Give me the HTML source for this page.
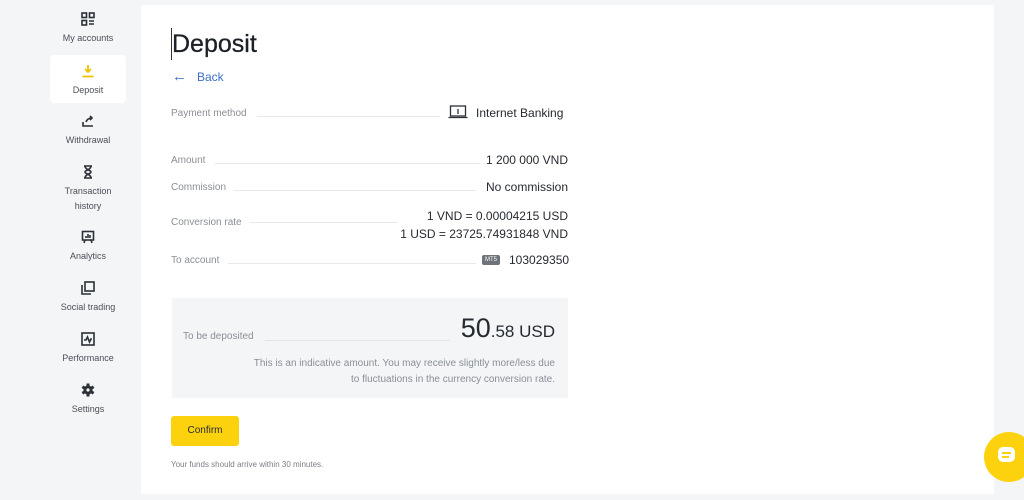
<!DOCTYPE html>
<html><head><meta charset="utf-8"><style>
*{margin:0;padding:0;box-sizing:border-box}
body{width:1024px;height:500px;background:#f3f5f7;font-family:"Liberation Sans",sans-serif;position:relative;overflow:hidden;color:#252a31}
.nav{position:absolute;left:50px;width:76px;text-align:center;font-size:9px;color:#4a4f56;line-height:15px}
.nav svg{display:block;margin:0 auto 5px}
.act{background:#fff;border-radius:4px}
.card{position:absolute;left:141px;top:5px;width:853px;height:489px;background:#fff}
.abs{position:absolute}
.lbl{font-size:10px;color:#8a8f96}
.val{font-size:12px;color:#252a31}
.ln{position:absolute;height:1px;background:#e6e8eb}
</style></head><body>
<div class="nav" style="top:12px"><svg width="14" height="14" viewBox="0 0 14 14" fill="none" stroke="#2b3036" stroke-width="1.6"><rect x="1" y="1" width="4.5" height="4.5"/><rect x="8.5" y="1" width="4.5" height="4.5"/><rect x="1" y="8.5" width="4.5" height="4.5"/><path d="M8 9h5M8 12h5"/></svg>My accounts</div>
<div class="nav act" style="top:55px;height:48px;padding-top:9px"><svg width="14" height="14" viewBox="0 0 14 14" fill="none" stroke="#f2c200" stroke-width="1.8"><path d="M7 1v7M4 5l3 3 3-3M1.5 12.5h11"/></svg>Deposit</div>
<div class="nav" style="top:114px"><svg width="14" height="14" viewBox="0 0 14 14" fill="none" stroke="#2b3036" stroke-width="1.6"><path d="M2 8v4h10M5 8c1-3 3-4 6-4M9 2l2 2-2 2"/></svg>Withdrawal</div>
<div class="nav" style="top:165px"><svg width="14" height="14" viewBox="0 0 14 14" fill="none" stroke="#2b3036" stroke-width="1.6"><path d="M3 1h8M3 13h8M4 1c0 4 6 4 6 6s-6 2-6 6M10 1c0 4-6 4-6 6s6 2 6 6"/></svg>Transaction<br>history</div>
<div class="nav" style="top:230px"><svg width="14" height="14" viewBox="0 0 14 14" fill="none" stroke="#2b3036" stroke-width="1.6"><rect x="1.5" y="1.5" width="11" height="8.5"/><path d="M5 8V6M7 8V4M9 8V5M4 10l-1 3M10 10l1 3"/></svg>Analytics</div>
<div class="nav" style="top:281px"><svg width="14" height="14" viewBox="0 0 14 14" fill="none" stroke="#2b3036" stroke-width="1.6"><rect x="4" y="1" width="9" height="9"/><path d="M1 4v9h9"/></svg>Social trading</div>
<div class="nav" style="top:332px"><svg width="14" height="14" viewBox="0 0 14 14" fill="none" stroke="#2b3036" stroke-width="1.6"><rect x="1" y="1" width="12" height="12"/><path d="M3 8h2l1.5-3 2 5 1.5-3h1"/></svg>Performance</div>
<div class="nav" style="top:383px"><svg width="14" height="14" viewBox="0 0 14 14"><g fill="#2b3036"><rect x="5.5" y="0.5" width="3" height="13"/><rect x="5.5" y="0.5" width="3" height="13" transform="rotate(60 7 7)"/><rect x="5.5" y="0.5" width="3" height="13" transform="rotate(120 7 7)"/><circle cx="7" cy="7" r="4.6"/></g><circle cx="7" cy="7" r="1.6" fill="#f3f5f7"/></svg>Settings</div>

<div class="card"></div>
<div class="abs" style="left:171px;top:28px;width:1px;height:32px;background:#333"></div>
<div class="abs" style="left:172px;top:30px;font-size:25px;color:#1c2127;-webkit-text-stroke:0.3px #1c2127">Deposit</div>
<div class="abs" style="left:172px;top:68px;font-size:12px;color:#3d6fc4"><span style="font-size:15px">&#8592;</span>&nbsp;&nbsp;&nbsp;Back</div>

<div class="abs lbl" style="left:171px;top:108px">Payment method</div>
<div class="ln" style="left:257px;width:183px;top:116px"></div>
<svg class="abs" style="left:448px;top:105px" width="20" height="14" viewBox="0 0 20 14" fill="none" stroke="#2b3036" stroke-width="1.3"><rect x="2.5" y="1" width="15" height="10"/><path d="M0.5 12.5h19M10 4v5"/></svg>
<div class="abs val" style="left:476px;top:106px">Internet Banking</div>

<div class="abs lbl" style="left:171px;top:155px">Amount</div>
<div class="ln" style="left:215px;width:265px;top:163px"></div>
<div class="abs val" style="right:456px;top:153px">1 200 000 VND</div>
<div class="abs lbl" style="left:171px;top:182px">Commission</div>
<div class="ln" style="left:234px;width:242px;top:190px"></div>
<div class="abs val" style="right:456px;top:180px">No commission</div>
<div class="abs lbl" style="left:171px;top:217px">Conversion rate</div>
<div class="ln" style="left:250px;width:147px;top:222px"></div>
<div class="abs val" style="right:456px;top:207px;text-align:right;line-height:18px">1 VND = 0.00004215 USD<br>1 USD = 23725.74931848 VND</div>
<div class="abs lbl" style="left:171px;top:255px">To account</div>
<div class="ln" style="left:228px;width:248px;top:263px"></div>
<div class="abs" style="left:482px;top:255px;width:18px;height:10px;background:#6f747a;border-radius:2px;color:#fff;font-size:6px;text-align:center;line-height:10px">MT5</div>
<div class="abs val" style="left:509px;top:253px">103029350</div>

<div class="abs" style="left:172px;top:298px;width:396px;height:100px;background:#f3f5f7"></div>
<div class="abs lbl" style="left:183px;top:331px">To be deposited</div>
<div class="ln" style="left:265px;width:185px;top:340px;background:#e3e5e8"></div>
<div class="abs" style="right:469px;top:313px;color:#252a31"><span style="font-size:27px">50</span><span style="font-size:17px">.58 USD</span></div>
<div class="abs" style="right:469px;top:356px;font-size:10px;color:#8a8f96;text-align:right;line-height:16px">This is an indicative amount. You may receive slightly more/less due<br>to fluctuations in the currency conversion rate.</div>

<div class="abs" style="left:171px;top:416px;width:68px;height:30px;background:#fcd20f;border-radius:3px;font-size:10px;text-align:center;line-height:30px;color:#252a31">Confirm</div>
<div class="abs" style="left:171px;top:460px;font-size:8px;color:#7a7f86">Your funds should arrive within 30 minutes.</div>

<div class="abs" style="left:984px;top:432px;width:50px;height:50px;border-radius:50%;background:#fcd20f"></div>
<div class="abs" style="left:998px;top:447px;width:17px;height:15px;border-radius:5px;background:#fff"></div>
<div class="abs" style="left:1002px;top:452px;width:9px;height:1.5px;background:#fcd20f"></div>
<div class="abs" style="left:1002px;top:456px;width:7px;height:1.5px;background:#fcd20f"></div>
</body></html>
